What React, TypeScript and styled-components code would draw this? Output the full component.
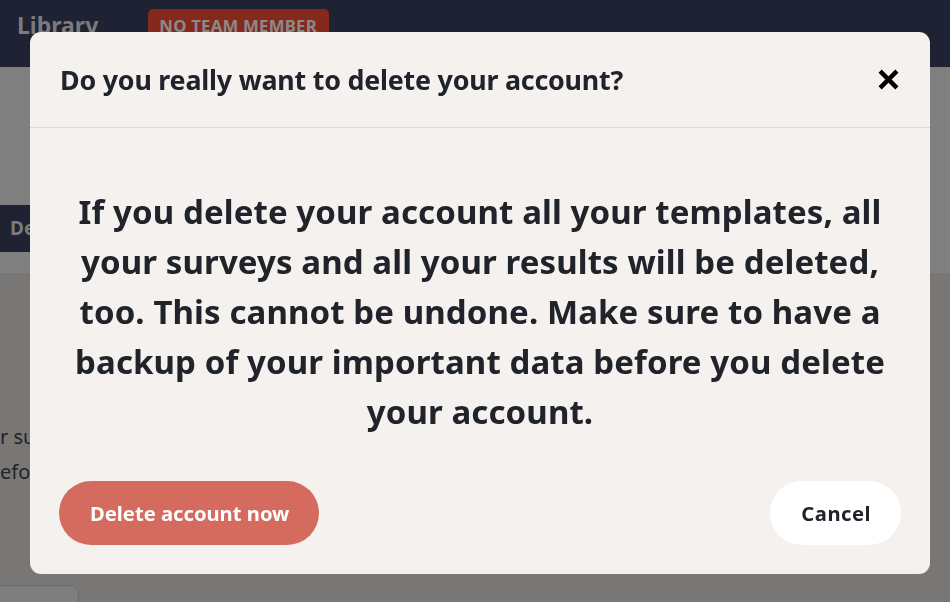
import React from "react";
import styled, { createGlobalStyle } from "styled-components";

const Global = createGlobalStyle`
  html, body { margin: 0; padding: 0; }
  body {
    width: 950px;
    height: 602px;
    overflow: hidden;
    background: #797775;
    font-family: "Noto Sans", "Open Sans", sans-serif;
  }
`;

const Page = styled.div`
  position: relative;
  width: 950px;
  height: 602px;
  overflow: hidden;
  display: flex;
  flex-direction: column;
`;

const TopBar = styled.header`
  height: 67px;
  flex: none;
  background: #1f2233;
  display: flex;
  align-items: flex-start;
  gap: 50px;
  padding: 9px 0 0 17px;
  box-sizing: border-box;
`;

const Brand = styled.div`
  font-size: 23px;
  font-weight: 700;
  color: #7b7b7d;
  line-height: 32px;
`;

const Badge = styled.div`
  background: #85291c;
  color: #8a8a8a;
  font-size: 16.8px;
  font-weight: 700;
  border-radius: 5px;
  height: 40px;
  padding: 5px 12px 0 11px;
  box-sizing: border-box;
  letter-spacing: 0.2px;
`;

const Band = styled.div`
  height: 206px;
  flex: none;
  background: #808080;
  display: flex;
  flex-direction: column;
  justify-content: flex-start;
  padding-top: 138px;
  box-sizing: border-box;
`;

const Tab = styled.div`
  width: 220px;
  height: 47px;
  background: #1f2233;
  color: #7a7a7c;
  font-size: 19px;
  font-weight: 700;
  line-height: 47px;
  padding-left: 10px;
  box-sizing: border-box;
`;

const Content = styled.div`
  flex: 1;
  display: flex;
  flex-direction: column;
  padding-top: 146px;
`;

const Para = styled.p`
  margin: 0;
  font-size: 20px;
  line-height: 35px;
  color: #232325;
  white-space: nowrap;
`;

const GhostButton = styled.div`
  margin-top: 96px;
  width: 78px;
  height: 30px;
  border: 1px solid #6c6c6c;
  border-left: none;
  border-radius: 0 9px 0 0;
  background: #7e7e7e;
`;

const Overlay = styled.div`
  position: fixed;
  inset: 0;
  padding: 32px 20px 28px 30px;
  box-sizing: border-box;
  display: flex;
  align-items: flex-start;
`;

const Modal = styled.div`
  width: 900px;
  height: 542px;
  background: #f4f1ee;
  border-radius: 11px;
  display: flex;
  flex-direction: column;
  overflow: hidden;
`;

const ModalHeader = styled.div`
  height: 96px;
  flex: none;
  display: flex;
  align-items: center;
  justify-content: space-between;
  padding: 0 30px;
  border-bottom: 1px solid #dedbe0;
  box-sizing: border-box;
`;

const Title = styled.h2`
  margin: 0;
  font-size: 26.8px;
  font-weight: 700;
  color: #21232b;
  letter-spacing: -0.2px;
`;

const Close = styled.button`
  border: none;
  background: none;
  padding: 0;
  width: 24px;
  height: 24px;
  display: flex;
  align-items: center;
  justify-content: center;
  cursor: pointer;
`;

const ModalBody = styled.div`
  flex: 1;
  display: flex;
  flex-direction: column;
  padding: 59px 29px 29px;
`;

const Message = styled.p`
  margin: 0;
  text-align: center;
  font-size: 33px;
  line-height: 50px;
  font-weight: 700;
  color: #21232b;
  padding: 0 12px;
  letter-spacing: 0.1px;
`;

const Actions = styled.div`
  margin-top: auto;
  display: flex;
  justify-content: space-between;
  align-items: center;
`;

const PillButton = styled.button<{ $variant: "danger" | "plain" }>`
  height: 64px;
  border: none;
  border-radius: 32px;
  font-family: inherit;
  font-size: 20.2px;
  font-weight: 700;
  padding: 0 30px 0 31px;
  background: ${(p) => (p.$variant === "danger" ? "#d56b5e" : "#ffffff")};
  color: ${(p) => (p.$variant === "danger" ? "#ffffff" : "#21232b")};
  letter-spacing: ${(p) => (p.$variant === "danger" ? "0" : "0.5px")};
  cursor: pointer;
`;

export default function App() {
  return (
    <>
      <Global />
      <Page>
        <TopBar>
          <Brand>Library</Brand>
          <Badge>NO TEAM MEMBER</Badge>
        </TopBar>
        <Band>
          <Tab>Delete account</Tab>
        </Band>
        <Content>
          <Para>r surveys and all your results will be deleted, too.</Para>
          <Para>efore you delete your account.</Para>
          <GhostButton />
        </Content>
        <Overlay>
          <Modal role="dialog" aria-modal="true">
            <ModalHeader>
              <Title>Do you really want to delete your account?</Title>
              <Close aria-label="Close">
                <svg width="21" height="21" viewBox="0 0 20 20">
                  <path
                    d="M3.5 3.5 L16.5 16.5 M16.5 3.5 L3.5 16.5"
                    stroke="#000"
                    strokeWidth="4.2"
                    strokeLinecap="square"
                    fill="none"
                  />
                </svg>
              </Close>
            </ModalHeader>
            <ModalBody>
              <Message>
                If you delete your account all your templates, all your surveys
                and all your results will be deleted, too. This cannot be
                undone. Make sure to have a backup of your important data before
                you delete your account.
              </Message>
              <Actions>
                <PillButton $variant="danger">Delete account now</PillButton>
                <PillButton $variant="plain">Cancel</PillButton>
              </Actions>
            </ModalBody>
          </Modal>
        </Overlay>
      </Page>
    </>
  );
}
